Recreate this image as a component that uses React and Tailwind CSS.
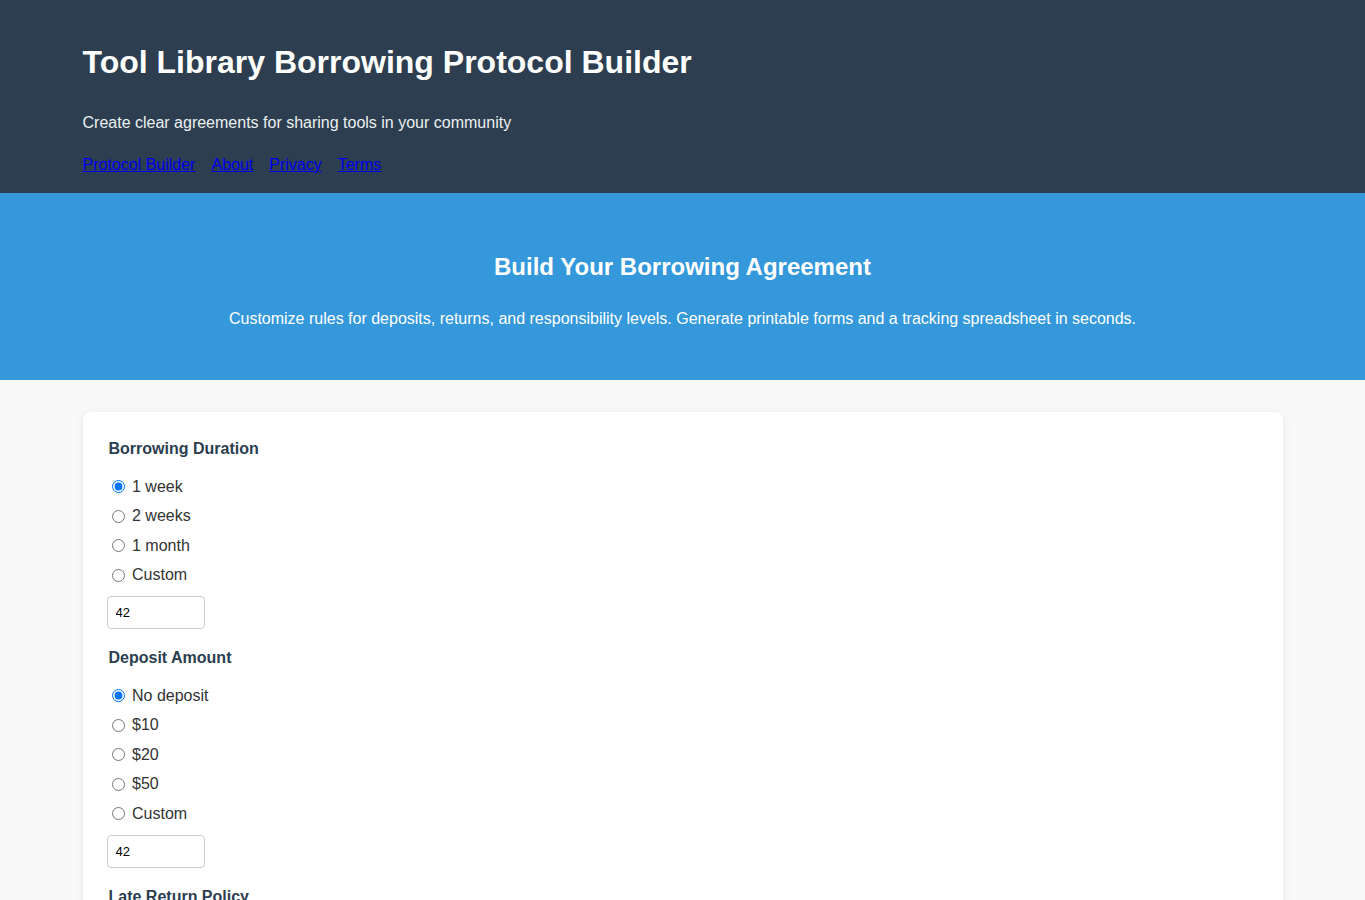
import { useState } from 'react';

const font = { fontFamily: '"Liberation Sans", Arial, sans-serif' };

function RadioGroup({ title, name, options, value, onChange, custom, onCustom }) {
    return (
        <div className="mb-[20px]">
            <div className="pl-[2px] text-[16px] leading-[18px] font-bold text-[#2c3e50] mb-[14px]">{title}</div>
            <div className="flex flex-col">
                {options.map((opt) => (
                    <label key={opt} className="h-[29.5px] flex items-center text-[16px] text-[#333] cursor-pointer">
                        <input
                            type="radio"
                            name={name}
                            checked={value === opt}
                            onChange={() => onChange(opt)}
                            className="ml-[5px] mr-[7.5px] w-[13px] h-[13px]"
                        />
                        {opt}
                    </label>
                ))}
            </div>
            <input
                type="number"
                value={custom}
                onChange={(e) => onCustom(e.target.value)}
                className="mt-[6px] w-[98px] h-[33px] px-[8px] text-[13px] text-black bg-white border border-[#ccc] rounded-[4px]"
            />
        </div>
    );
}

export default function App() {
    const [duration, setDuration] = useState('1 week');
    const [durationCustom, setDurationCustom] = useState('42');
    const [deposit, setDeposit] = useState('No deposit');
    const [depositCustom, setDepositCustom] = useState('42');
    const [late, setLate] = useState('Friendly reminder');
    const [lateCustom, setLateCustom] = useState('42');

    return (
        <div style={font} className="min-h-screen bg-[#f9f9f9]">
            <header className="bg-[#2c3e50] text-white">
                <div className="max-w-[1200px] mx-auto pt-[44px] pb-[19px]">
                    <h1 className="text-[32px] leading-[37px] font-bold mb-[33px]">Tool Library Borrowing Protocol Builder</h1>
                    <p className="text-[16px] leading-[18px] text-[#ecf0f1]">Create clear agreements for sharing tools in your community</p>
                    <nav className="mt-[24px] flex gap-4 text-[16px] leading-[18px]">
                        <a href="#" className="text-[#0000ee] underline">Protocol Builder</a>
                        <a href="#" className="text-[#0000ee] underline">About</a>
                        <a href="#" className="text-[#0000ee] underline">Privacy</a>
                        <a href="#" className="text-[#0000ee] underline">Terms</a>
                    </nav>
                </div>
            </header>

            <section className="bg-[#3498db] text-white text-center pt-[60px] pb-[52px]">
                <h2 className="text-[24px] leading-[28px] font-bold mb-[29px]">Build Your Borrowing Agreement</h2>
                <p className="text-[16px] leading-[18px]">
                    Customize rules for deposits, returns, and responsibility levels. Generate printable forms and a tracking spreadsheet in seconds.
                </p>
            </section>

            <main className="max-w-[1200px] mx-auto pt-[32px] pb-[40px]">
                <div className="bg-white rounded-[8px] shadow-[0_2px_10px_rgba(0,0,0,0.08)] px-[24px] pt-[28px] pb-[24px]">
                    <RadioGroup
                        title="Borrowing Duration"
                        name="duration"
                        options={['1 week', '2 weeks', '1 month', 'Custom']}
                        value={duration}
                        onChange={setDuration}
                        custom={durationCustom}
                        onCustom={setDurationCustom}
                    />
                    <RadioGroup
                        title="Deposit Amount"
                        name="deposit"
                        options={['No deposit', '$10', '$20', '$50', 'Custom']}
                        value={deposit}
                        onChange={setDeposit}
                        custom={depositCustom}
                        onCustom={setDepositCustom}
                    />
                    <RadioGroup
                        title="Late Return Policy"
                        name="late"
                        options={['Friendly reminder', '$1 per day', 'Suspend borrowing', 'Custom']}
                        value={late}
                        onChange={setLate}
                        custom={lateCustom}
                        onCustom={setLateCustom}
                    />
                </div>
            </main>
        </div>
    );
}
